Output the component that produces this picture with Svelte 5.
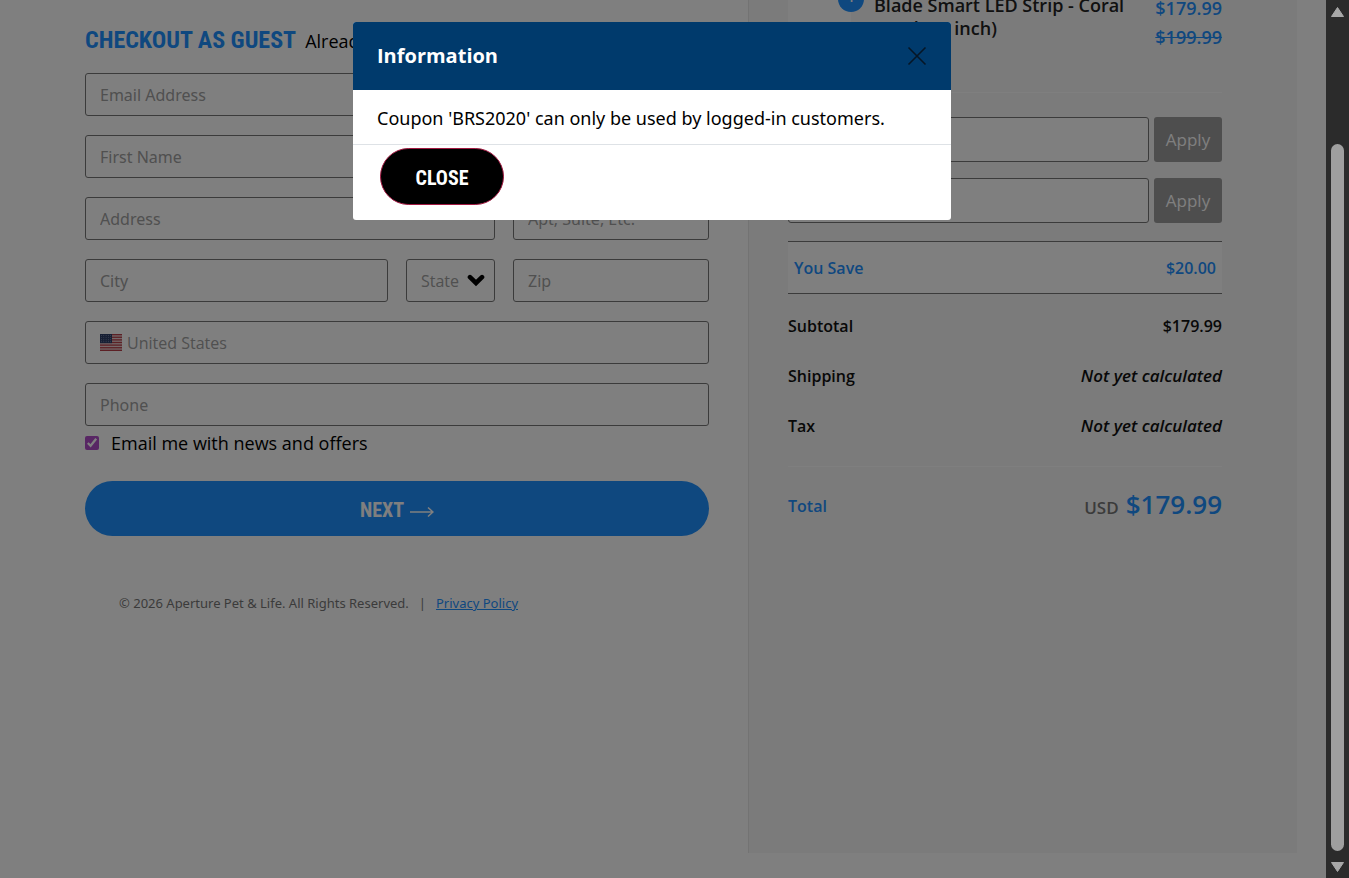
<script>
  let accepts = $state(true);
  let open = $state(true);
  const coupons = [
    { id: 'coupon', label: 'Coupon code' },
    { id: 'gift', label: 'Gift certificate' }
  ];
  const stripes = [0, 2, 4, 6, 8, 10, 12];
</script>

<div class="window">
  <div class="page">
    <main class="checkout">
      <header class="title">
        <h1>CHECKOUT AS GUEST</h1>
        <span>Already have an account?</span>
      </header>

      <form onsubmit={(e) => e.preventDefault()}>
        <input class="field full" type="email" placeholder="Email Address" aria-label="Email Address" />
        <div class="full halves">
          <input class="field" placeholder="First Name" aria-label="First Name" />
          <input class="field" placeholder="Last Name" aria-label="Last Name" />
        </div>
        <input class="field wide" placeholder="Address" aria-label="Address" />
        <input class="field" placeholder="Apt, Suite, Etc." aria-label="Apt, Suite, Etc." />
        <input class="field" placeholder="City" aria-label="City" />
        <div class="field picker">
          <select aria-label="State"><option>State</option></select>
          <svg width="18" height="13" viewBox="0 0 18 13" aria-hidden="true">
            <path d="M3 3.2 9 9 15 3.2" fill="none" stroke="#000" stroke-width="4.6" stroke-linecap="round" />
          </svg>
        </div>
        <input class="field" placeholder="Zip" aria-label="Zip" />
        <div class="field full country">
          <svg width="22" height="17" viewBox="0 0 22 17" aria-hidden="true">
            <rect width="22" height="17" fill="#e8d0d2" />
            {#each stripes as s}
              <rect y={s * 1.3077} width="22" height="1.3077" fill="#b8404a" />
            {/each}
            <rect width="12" height="9.15" fill="#2f3f68" />
            <g fill="#a9b3d0">
              {#each [1.5, 3.6, 5.7, 7.8] as y}
                {#each [1.5, 3.8, 6.1, 8.4, 10.5] as x}
                  <circle cx={x} cy={y} r="0.45" />
                {/each}
              {/each}
            </g>
          </svg>
          <select aria-label="Country"><option>United States</option></select>
        </div>
        <input class="field full" type="tel" placeholder="Phone" aria-label="Phone" />
        <label class="full news">
          <input type="checkbox" bind:checked={accepts} />
          Email me with news and offers
        </label>
        <button class="full next" type="submit">
          NEXT
          <svg width="24" height="12" viewBox="0 0 24 12" aria-hidden="true">
            <path d="M0 6H23M18 1.500 23 6 18 10.500" fill="none" stroke="#fff" stroke-width="1.5" />
          </svg>
        </button>
      </form>

      <footer>
        <span>© 2026 Aperture Pet &amp; Life. All Rights Reserved.</span>
        <span>|</span>
        <a href="#privacy">Privacy Policy</a>
      </footer>
    </main>

    <aside class="summary">
      <div class="item">
        <div class="thumb"><span class="badge">1</span></div>
        <p class="name">Blade Smart LED Strip - Coral Pearl (48 inch)</p>
        <p class="price">$179.99<br /><s>$199.99</s></p>
      </div>

      <div class="coupons">
        {#each coupons as c}
          <div class="coupon">
            <input id={c.id} aria-label={c.label} />
            <button type="button">Apply</button>
          </div>
        {/each}
      </div>

      <div class="save"><span>You Save</span><span>$20.00</span></div>

      <dl>
        <div><dt>Subtotal</dt><dd>$179.99</dd></div>
        <div><dt>Shipping</dt><dd><em>Not yet calculated</em></dd></div>
        <div><dt>Tax</dt><dd><em>Not yet calculated</em></dd></div>
      </dl>

      <div class="total">
        <span>Total</span>
        <span class="sum"><small>USD</small><strong>$179.99</strong></span>
      </div>
    </aside>

    {#if open}
      <div class="backdrop">
        <div class="modal" role="dialog" aria-modal="true" aria-labelledby="info-title">
          <div class="modal-head">
            <h2 id="info-title">Information</h2>
            <button type="button" aria-label="Dismiss" onclick={() => (open = false)}>
              <svg width="20" height="20" viewBox="0 0 20 20" aria-hidden="true">
                <path d="M1.500 1.500 18.500 18.500M18.500 1.500 1.500 18.500" stroke="#061626" stroke-width="1.6" />
              </svg>
            </button>
          </div>
          <p>Coupon 'BRS2020' can only be used by logged-in customers.</p>
          <div class="modal-foot">
            <button type="button" onclick={() => (open = false)}>CLOSE</button>
          </div>
        </div>
      </div>
    {/if}
  </div>

  <div class="scrollbar" aria-hidden="true">
    <svg width="15" height="24" viewBox="0 0 15 24">
      <path d="M7.500 7.500 13.500 16.500H1.500Z" fill="#a8a8a8" stroke="#a8a8a8" stroke-linejoin="round" />
    </svg>
    <div class="track"><div class="grip"></div></div>
    <svg width="15" height="24" viewBox="0 0 15 24">
      <path d="M7.500 17.500 13.500 8.500H1.500Z" fill="#a8a8a8" stroke="#a8a8a8" stroke-linejoin="round" />
    </svg>
  </div>
</div>

<style>
  :global(body) {
    margin: 0;
    background: #fff;
  }
  * {
    box-sizing: border-box;
  }
  .window {
    display: flex;
    height: 100vh;
    font-family: 'Open Sans', 'Noto Sans', sans-serif;
    font-size: 18px;
    line-height: 24px;
    color: #000;
  }
  input,
  select,
  button {
    font: inherit;
    color: inherit;
    margin: 0;
  }
  p,
  h1,
  h2,
  dl,
  dd {
    margin: 0;
  }
  .page {
    position: relative;
    flex: 1;
    min-width: 0;
    overflow: hidden;
    display: grid;
    grid-template-columns: minmax(0, 748fr) minmax(0, 549fr);
    padding: 0 29px 25px 0;
    background: #fff;
  }

  .checkout {
    padding: 18px 39px 0 85px;
  }
  .title {
    display: flex;
    align-items: baseline;
    gap: 9px;
    height: 55px;
    white-space: nowrap;
  }
  h1,
  .next,
  .modal-foot button {
    font-family: 'Roboto Condensed', 'Liberation Sans Narrow', sans-serif;
    font-weight: 700;
  }
  h1 {
    font-size: 24px;
    line-height: 44px;
    color: #1e90ff;
  }
  form {
    display: grid;
    grid-template-columns: 303fr 89fr 196fr;
    gap: 19px 18px;
  }
  .full {
    grid-column: 1 / -1;
  }
  .wide {
    grid-column: span 2;
  }
  .halves {
    display: grid;
    grid-template-columns: 1fr 1fr;
    gap: 18px;
  }
  .field {
    min-width: 0;
    width: 100%;
    height: 43px;
    padding: 0 14px;
    border: 1px solid #777;
    border-radius: 3px;
    background: #fff;
    font-size: 16px;
    color: #a0a0a0;
  }
  .field::placeholder {
    color: #a0a0a0;
    opacity: 1;
  }
  input.field,
  .modal p,
  footer {
    font-family: 'Noto Sans', 'Open Sans', sans-serif;
  }
  .picker,
  .country {
    display: flex;
    align-items: center;
    gap: 5px;
  }
  .picker {
    padding-right: 9px;
  }
  .field select {
    flex: 1;
    min-width: 0;
    padding: 0;
    border: 0;
    background: none;
    appearance: none;
  }
  .news {
    display: flex;
    align-items: center;
    gap: 12px;
    height: 33px;
    margin-top: -19px;
  }
  .news input {
    width: 14px;
    height: 14px;
    accent-color: #b04cc8;
  }
  .next {
    display: flex;
    align-items: center;
    justify-content: center;
    gap: 6px;
    height: 55px;
    margin-top: 3px;
    padding: 2px 0 0;
    border: 0;
    border-radius: 28px;
    background: #1e90ff;
    color: #fff;
    font-size: 20px;
  }
  .next svg {
    margin-top: 4px;
  }
  footer {
    display: flex;
    gap: 10px;
    padding: 55px 34px 0;
    font-size: 13px;
    color: #777;
    white-space: nowrap;
  }
  a {
    color: #1e90ff;
  }

  .summary {
    padding: 0 75px 0 39px;
    border-left: 1px solid #e6e6e6;
    background: #f6f6f6;
    font-size: 16px;
    font-weight: 600;
  }
  .item {
    display: grid;
    grid-template-columns: 63px minmax(0, 1fr) auto;
    gap: 23px;
    height: 99px;
    margin-top: -6px;
    border-bottom: 1px solid #fff;
    font-size: 18px;
    line-height: 23px;
    color: #222;
  }
  .thumb {
    position: relative;
    height: 32px;
    background: #fff;
  }
  .badge {
    position: absolute;
    top: -8px;
    right: -13px;
    width: 26px;
    height: 26px;
    border-radius: 50%;
    background: #1e90ff;
    color: #fff;
    font-size: 13px;
    text-align: center;
  }
  .price {
    line-height: 29px;
    color: #1e90ff;
  }
  .coupons {
    display: grid;
    gap: 16px;
    padding: 24px 0 18px;
  }
  .coupon {
    display: flex;
    gap: 5px;
    height: 45px;
  }
  .coupon input {
    flex: 1;
    min-width: 0;
    border: 1px solid #777;
    border-radius: 3px;
    background: #fff;
  }
  .coupon button {
    width: 68px;
    padding: 0;
    border: 0;
    border-radius: 3px;
    background: #9c9c9c;
    color: #fff;
    font-size: 17px;
    font-weight: 400;
  }
  .save {
    display: flex;
    align-items: center;
    justify-content: space-between;
    height: 53px;
    padding: 0 6px;
    border: solid #777;
    border-width: 1px 0;
    background: #fff;
    color: #1e90ff;
  }
  dl {
    display: grid;
    gap: 26px;
    padding: 20px 0 28px;
    border-bottom: 1px solid #fff;
    color: #111;
  }
  dl div {
    display: flex;
    align-items: baseline;
    justify-content: space-between;
  }
  em,
  small {
    font-size: 17px;
  }
  .total {
    display: flex;
    align-items: center;
    justify-content: space-between;
    padding-top: 20px;
    line-height: 34px;
    color: #1e90ff;
  }
  .sum {
    display: flex;
    align-items: baseline;
    gap: 7px;
  }
  small {
    color: #777;
  }
  strong {
    font-size: 26px;
    font-weight: 600;
  }

  .backdrop {
    position: absolute;
    inset: 0;
    padding: 22px 22px 0 0;
    background: rgba(0, 0, 0, 0.5);
  }
  .modal {
    width: 598px;
    max-width: 100%;
    margin: 0 auto;
    border-radius: 3px;
    overflow: hidden;
    background: #fff;
  }
  .modal-head {
    display: flex;
    align-items: center;
    justify-content: space-between;
    height: 68px;
    padding: 0 24px;
    background: #003a6c;
    color: #fff;
  }
  h2 {
    font-size: 20px;
    line-height: 28px;
    font-weight: 700;
  }
  .modal-head button {
    display: flex;
    padding: 0;
    border: 0;
    background: none;
  }
  .modal p {
    padding: 16px 24px 14px;
    border-bottom: 1px solid #dee2e6;
  }
  .modal-foot {
    padding: 3px 27px 15px;
  }
  .modal-foot button {
    display: block;
    width: 124px;
    height: 57px;
    padding: 2px 0 0;
    border: 1px solid #a01840;
    border-radius: 29px;
    background: #000;
    color: #fff;
    font-size: 20px;
  }

  .scrollbar {
    display: flex;
    flex-direction: column;
    align-items: center;
    width: 23px;
    background: #2b2b2b;
  }
  .track {
    flex: 1;
    display: flex;
    width: 13px;
    padding: 120px 0 3px;
  }
  .grip {
    flex: 1;
    border-radius: 7px;
    background: #9f9f9f;
  }
</style>
